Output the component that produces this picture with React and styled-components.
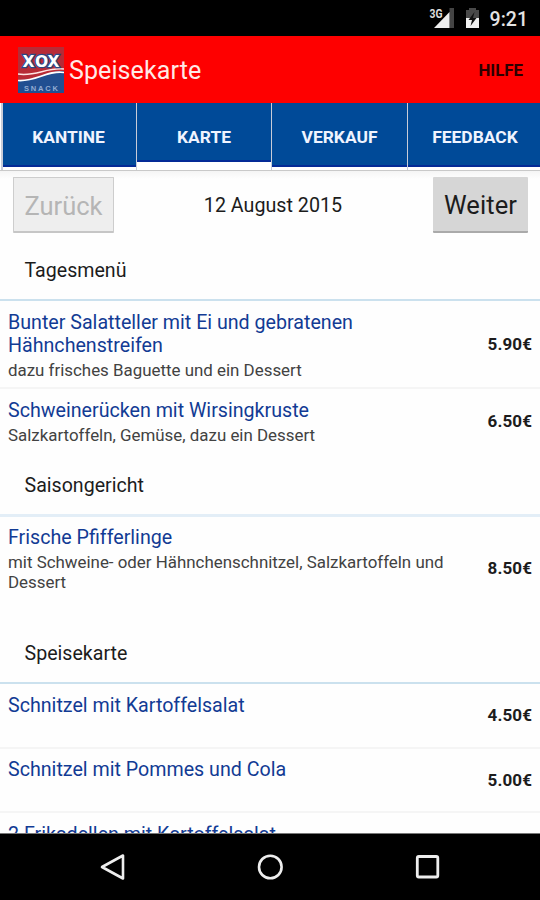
import React from "react";
import styled, { createGlobalStyle } from "styled-components";

const Global = createGlobalStyle`
  * { box-sizing: border-box; }
  body { margin: 0; background: #fff; font-family: Roboto, "Liberation Sans", sans-serif; }
`;

const Screen = styled.div`
  width: 540px;
  height: 900px;
  display: flex;
  flex-direction: column;
  overflow: hidden;
  background: #fefefe;
  color: #1c1c1c;
`;

const StatusBar = styled.div`
  flex: none;
  height: 36px;
  padding-right: 12px;
  display: flex;
  align-items: center;
  justify-content: flex-end;
  background: #000;
`;

const Clock = styled.span`
  font-size: 19.5px;
  font-weight: 500;
  line-height: 24px;
  margin: 3px 0 0 9px;
  color: #e4e4e4;
`;

const AppBar = styled.header`
  flex: none;
  height: 67px;
  padding: 0 17px 0 18px;
  display: flex;
  align-items: center;
  background: #fe0000;
`;

const AppTitle = styled.h1`
  margin: 2px 0 0 5px;
  flex: 1;
  font-size: 25px;
  font-weight: 400;
  letter-spacing: 0.1px;
  color: #ffe9e6;
`;

const Help = styled.span`
  margin-top: 1px;
  font-size: 16.8px;
  font-weight: 700;
  color: #2c0000;
`;

const Tabs = styled.nav`
  flex: none;
  height: 68px;
  padding-left: 1px;
  display: grid;
  grid-template-columns: 135px 135px 136px 1fr;
  border-bottom: 1px solid #c9c9c9;
  background: #fff;
`;

const Tab = styled.div`
  height: ${(p) => (p.$active ? 59 : 64)}px;
  border-bottom: 2px solid #042a96;
  background: #004a98;
  color: #f0f4ff;
  font-size: 17.4px;
  font-weight: 700;
  display: flex;
  align-items: center;
  justify-content: center;
  padding-top: ${(p) => (p.$active ? 11 : 6)}px;
`;

const TabCell = styled.div`
  border-left: 1px solid #c8ccd8;
  &:first-child { border-left-width: 2px; }
  &:first-child > div { padding-right: 2px; }
  &:last-child > div { padding-left: 2px; }
`;

const DateBar = styled.div`
  flex: none;
  height: 69px;
  padding: 6px 12px 0 13px;
  display: flex;
  align-items: flex-start;
  justify-content: space-between;
  background: linear-gradient(#f5f5f5, #fefefe 8px);
`;

const PageButton = styled.button`
  width: ${(p) => (p.disabled ? 101 : 95)}px;
  height: 56px;
  margin: 0;
  padding: 2px 0 0;
  border: ${(p) => (p.disabled ? "1.5px solid #cdcdcd" : "0")};
  border-bottom: ${(p) => (p.disabled ? "2px solid #c6c6c6" : "2px solid #aaa")};
  border-radius: 1px;
  background: ${(p) => (p.disabled ? "#eeeeee" : "#d6d6d6")};
  color: ${(p) => (p.disabled ? "#b5b5b5" : "#1c1c1c")};
  font: 400 25.5px Roboto, sans-serif;
  letter-spacing: ${(p) => (p.disabled ? 0 : 0.1)}px;
`;

const DateText = styled.span`
  font-size: 19.7px;
  line-height: 24px;
  margin: 17px 0 0 -1px;
`;

const Menu = styled.main`
  flex: 1;
  min-height: 0;
  overflow: hidden;
  border-bottom: 1px solid #777;
`;

const SectionTitle = styled.h2`
  margin: 0;
  height: ${(p) => p.$height}px;
  padding: 0 0 16px 24.5px;
  display: flex;
  align-items: flex-end;
  border-bottom: ${(p) => p.$line || 2}px solid ${(p) => (p.$line ? "#e3eef7" : "#cbe1ee")};
  font-size: 19.6px;
  line-height: 24px;
  font-weight: 400;
`;

const Row = styled.article`
  height: ${(p) => p.$height}px;
  padding: ${(p) => p.$pad || 10}px 8px 0;
  display: flex;
  justify-content: space-between;
  border-bottom: ${(p) => (p.$last ? 0 : 2)}px solid #f5f5f5;
`;

const Dish = styled.div`
  width: 450px;
`;

const DishName = styled.div`
  font-size: 19.65px;
  line-height: 23px;
  white-space: pre-line;
  color: #123b94;
`;

const DishNote = styled.div`
  margin-top: 3px;
  font-size: 16.9px;
  line-height: 20px;
  white-space: pre-line;
  color: #424242;
`;

const Price = styled.span`
  margin-top: ${(p) => p.$top}px;
  font-size: 17px;
  line-height: 20px;
  font-weight: 700;
  letter-spacing: 0.1px;
`;

const NavBar = styled.footer`
  flex: none;
  height: 66px;
  display: grid;
  grid-template-columns: 156px 1fr 156px;
  padding: 0 35px;
  place-items: center;
  background: #000;
`;

const Logo = () => (
  <svg width="46" height="46" viewBox="0 0 46 46">
    <rect width="46" height="46" fill="#b72b36" />
    <path d="M0 33C18 34 29 23 46 24V46H0Z" fill="#214f91" />
    <path d="M0 27C17 30 29 20 46 22" fill="none" stroke="#ffe4e2" strokeWidth="1.5" />
    <path d="M0 33.500C18 35 29 23 46 25.500" fill="none" stroke="#fff" strokeWidth="1.7" />
    <text x="4.500 17 29.500" y="20" fontFamily="DejaVu Sans" fontWeight="700" fontSize="15.500" fill="#fff" stroke="#284985" strokeWidth="2.400" paintOrder="stroke">XOX</text>
    <text x="6" y="43.500" textLength="34" fontFamily="Liberation Sans" fontWeight="700" fontSize="7.500" fill="#94acd2">SNACK</text>
  </svg>
);

const StatusIcons = () => (
  <svg width="52" height="36" viewBox="430 0 52 36">
    <path d="M450.500 8H455V28H450.500Z" fill="#444" />
    <path d="M435 28L450.500 12V28Z" fill="#eee" />
    <text x="430.500" y="17.500" fontFamily="Roboto" fontWeight="700" fontSize="12" textLength="13" lengthAdjust="spacingAndGlyphs" fill="#ddd" stroke="#000" strokeWidth="1" paintOrder="stroke">3G</text>
    <path d="M467 10H470V8H477V10H480V19H467Z" fill="#494949" />
    <path d="M467 18H480V28H467Z" fill="#f2f2f2" />
    <path d="M475.500 12L469.500 20H473L471.500 26L477.500 18H474Z" fill="#111" />
  </svg>
);

const BackIcon = () => (
  <svg width="28" height="30" viewBox="0 0 28 30" fill="none" stroke="#eee" strokeWidth="2.600" strokeLinejoin="round">
    <path d="M3 15L24 3.500V26.500Z" />
  </svg>
);

const HomeIcon = () => (
  <svg width="28" height="28" viewBox="0 0 28 28" fill="none" stroke="#eee" strokeWidth="2.600">
    <circle cx="14.300" cy="14" r="11.300" />
  </svg>
);

const RecentIcon = () => (
  <svg width="28" height="28" viewBox="0 0 28 28" fill="none" stroke="#eee" strokeWidth="2.800">
    <rect x="4.300" y="3.500" width="20.500" height="20.500" rx="1.500" />
  </svg>
);

const tabs = ["KANTINE", "KARTE", "VERKAUF", "FEEDBACK"];

const sections = [
  {
    title: "Tagesmenü", height: 61,
    dishes: [
      { name: "Bunter Salatteller mit Ei und gebratenen\nHähnchenstreifen", note: "dazu frisches Baguette und ein Dessert", price: "5.90€", height: 88, top: 23 },
      { name: "Schweinerücken mit Wirsingkruste", note: "Salzkartoffeln, Gemüse, dazu ein Dessert", price: "6.50€", height: 64, top: 12, last: true },
    ],
  },
  {
    title: "Saisongericht", height: 64, line: 3,
    dishes: [
      { name: "Frische Pfifferlinge", note: "mit Schweine- oder Hähnchenschnitzel, Salzkartoffeln und\nDessert", price: "8.50€", height: 103, pad: 9, top: 32, last: true },
    ],
  },
  {
    title: "Speisekarte", height: 64,
    dishes: [
      { name: "Schnitzel mit Kartoffelsalat", price: "4.50€", height: 65, top: 11 },
      { name: "Schnitzel mit Pommes und Cola", price: "5.00€", height: 64, top: 12, pad: 9 },
      { name: "2 Frikadellen mit Kartoffelsalat", price: "", height: 65, top: 12 },
    ],
  },
];

export default function App() {
  return (
    <Screen>
      <Global />
      <StatusBar>
        <StatusIcons />
        <Clock>9:21</Clock>
      </StatusBar>
      <AppBar>
        <Logo />
        <AppTitle>Speisekarte</AppTitle>
        <Help>HILFE</Help>
      </AppBar>
      <Tabs>
        {tabs.map((t) => (
          <TabCell key={t}>
            <Tab $active={t === "KARTE"}>{t}</Tab>
          </TabCell>
        ))}
      </Tabs>
      <DateBar>
        <PageButton disabled>Zurück</PageButton>
        <DateText>12 August 2015</DateText>
        <PageButton>Weiter</PageButton>
      </DateBar>
      <Menu>
        {sections.map((s) => (
          <section key={s.title}>
            <SectionTitle $height={s.height} $line={s.line}>{s.title}</SectionTitle>
            {s.dishes.map((d) => (
              <Row key={d.name} $height={d.height} $last={d.last} $pad={d.pad}>
                <Dish>
                  <DishName>{d.name}</DishName>
                  {d.note && <DishNote>{d.note}</DishNote>}
                </Dish>
                <Price $top={d.top}>{d.price}</Price>
              </Row>
            ))}
          </section>
        ))}
      </Menu>
      <NavBar>
        <BackIcon />
        <HomeIcon />
        <RecentIcon />
      </NavBar>
    </Screen>
  );
}
